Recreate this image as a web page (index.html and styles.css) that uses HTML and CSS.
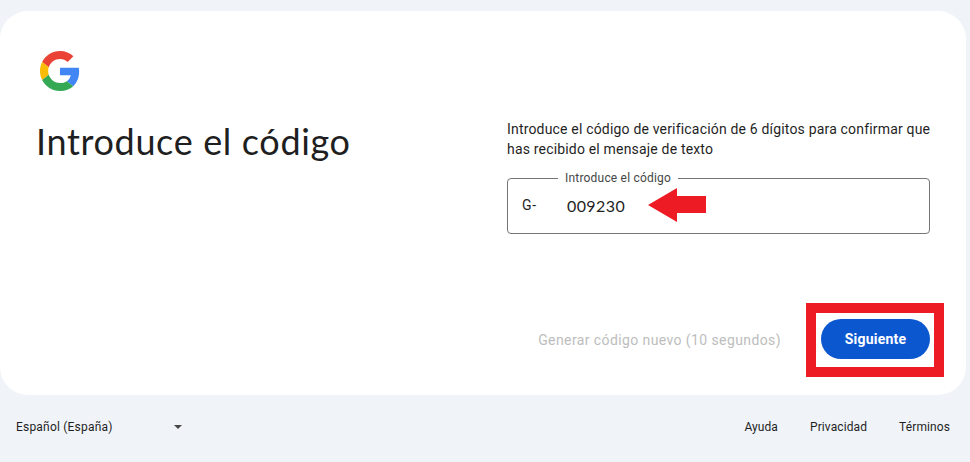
FILE: index.html
```html
<!DOCTYPE html>
<html lang="es">
<head>
<meta charset="utf-8">
<title>Introduce el código</title>
<link rel="stylesheet" href="styles.css">
</head>
<body>
<main class="card">
  <svg class="logo" viewBox="0 0 48 48" width="40" height="40" aria-label="Google">
    <path fill="#EA4335" d="M24 9.5c3.54 0 6.71 1.22 9.21 3.6l6.85-6.85C35.9 2.38 30.47 0 24 0 14.62 0 6.51 5.38 2.56 13.22l7.98 6.19C12.43 13.72 17.74 9.5 24 9.5z"/>
    <path fill="#4285F4" d="M46.98 24.55c0-1.57-.15-3.09-.38-4.55H24v9.02h12.94c-.58 2.96-2.26 5.48-4.78 7.18l7.73 6c4.51-4.18 7.09-10.36 7.09-17.65z"/>
    <path fill="#FBBC05" d="M10.53 28.59c-.48-1.45-.76-2.99-.76-4.59s.27-3.14.76-4.59l-7.98-6.19C.92 16.46 0 20.12 0 24c0 3.88.92 7.54 2.56 10.78l7.97-6.19z"/>
    <path fill="#34A853" d="M24 48c6.48 0 11.93-2.13 15.89-5.81l-7.73-6c-2.15 1.45-4.92 2.3-8.16 2.3-6.26 0-11.57-4.22-13.47-9.91l-7.98 6.19C6.51 42.62 14.62 48 24 48z"/>
  </svg>
  <div class="columns">
    <h1 class="title">Introduce el código</h1>
    <div class="form">
      <p class="hint">Introduce el código de verificación de 6 dígitos para confirmar que has recibido el mensaje de texto</p>
      <fieldset class="field">
        <legend class="legend">Introduce el código</legend>
        <span class="prefix">G-</span>
        <span class="code">009230</span>
        <svg class="arrow" viewBox="0 0 58 34" width="58" height="34" aria-hidden="true">
          <path fill="#ed1c24" d="M0 17 29 0V8H58V25H29V34Z"/>
        </svg>
      </fieldset>
    </div>
  </div>
  <div class="actions">
    <span class="resend">Generar código nuevo (10 segundos)</span>
    <div class="highlight">
      <button class="next" type="button">Siguiente</button>
    </div>
  </div>
</main>
<footer class="footer">
  <div class="lang">
    <span>Español (España)</span>
    <span class="caret"></span>
  </div>
  <nav class="links">
    <a>Ayuda</a>
    <a>Privacidad</a>
    <a>Términos</a>
  </nav>
</footer>
</body>
</html>
```
FILE: styles.css
```css
* { box-sizing: border-box; }
html, body { height: 100%; }
body {
  margin: 0;
  padding-top: 11px;
  background: #f0f4f9;
  font-family: Roboto, "Liberation Sans", sans-serif;
  color: #1f1f1f;
  overflow: hidden;
}
.card {
  position: relative;
  width: 966px;
  height: 384px;
  background: #fff;
  border-radius: 28px;
  padding: 40px 36px 0 36px;
  display: flex;
  flex-direction: column;
}
.logo { display: block; margin-left: 4px; }
.columns {
  display: flex;
  margin-top: 28px;
}
.title {
  width: 471px;
  margin: 0;
  font-family: Lato, Inter, sans-serif;
  font-weight: 400;
  font-size: 36px;
  line-height: 44px;
  letter-spacing: 0.65px;
  color: #1f1f1f;
}
.form { width: 423px; }
.hint {
  margin: 0 -10px 0 0;
  font-size: 14px;
  line-height: 20px;
  letter-spacing: 0.18px;
  color: #1f1f1f;
}
.field {
  position: relative;
  margin: 12px 0 0;
  padding: 0 0 8px 14px;
  height: 63px;
  min-width: 0;
  border: 1px solid #747775;
  border-radius: 4px;
  display: flex;
  align-items: center;
}
.legend {
  margin-left: 36px;
  padding: 0 7px;
  font-size: 12px;
  line-height: 14px;
  letter-spacing: 0.2px;
  color: #444746;
}
.prefix { width: 45px; font-size: 14px; letter-spacing: 0.8px; }
.code { font-family: Lato, Roboto, sans-serif; font-size: 16px; letter-spacing: 0.4px; }
.arrow {
  position: absolute;
  left: 140px;
  top: 3px;
}
.actions {
  margin-top: auto;
  margin-right: -14px;
  margin-bottom: 18px;
  display: flex;
  align-items: center;
  justify-content: flex-end;
}
.resend {
  font-size: 14px;
  font-weight: 400;
  letter-spacing: 0.4px;
  color: #bdbdbd;
  margin-right: 25px;
}
.highlight {
  border: 10px solid #ed1c24;
  padding: 6px 4px 8px 5px;
  background: #fff;
  display: flex;
}
.next {
  width: 109px;
  height: 40px;
  border: 0;
  border-radius: 20px;
  background: #0b57d0;
  color: #fff;
  font-family: Roboto, sans-serif;
  font-size: 14px;
  font-weight: 700;
  letter-spacing: 0.2px;
  padding: 0;
}
.footer {
  display: flex;
  justify-content: space-between;
  align-items: center;
  height: 63px;
  padding: 0 20px 0 16px;
  font-size: 12px;
  letter-spacing: 0.2px;
  color: #1f1f1f;
}
.lang { display: flex; align-items: center; width: 167px; justify-content: space-between; }
.caret {
  width: 0;
  height: 0;
  margin-right: 1.5px;
  border-left: 4.5px solid transparent;
  border-right: 4.5px solid transparent;
  border-top: 4.5px solid #444746;
}
.links { display: flex; gap: 32px; letter-spacing: 0.1px; }
```
